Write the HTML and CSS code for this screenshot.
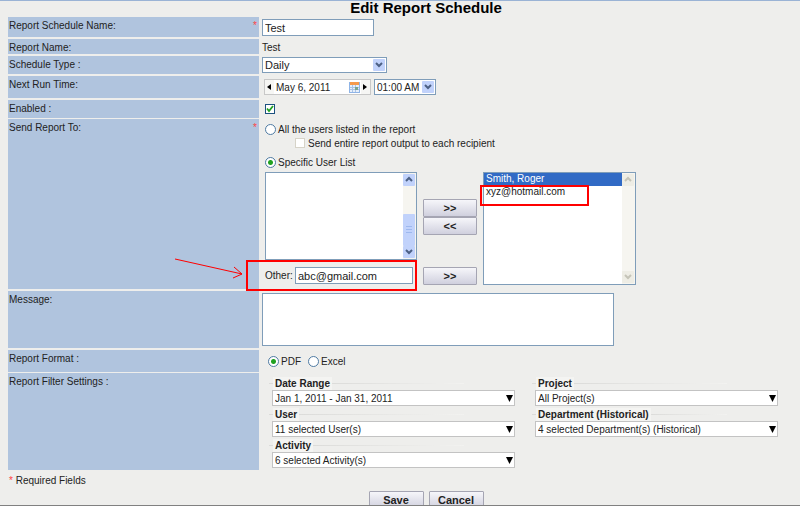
FILE: index.html
```html
<!DOCTYPE html>
<html lang="en">
<head>
    <meta charset="UTF-8">
    <meta name="viewport" content="width=device-width, initial-scale=1.0">
    <title>Edit Report Schedule</title>
    <link rel="stylesheet" href="styles.css">
</head>
<body>
<form class="page">
    <h1>Edit Report Schedule</h1>

    <div class="row row-name">
        <label class="name" for="schedName">Report Schedule Name: <b class="req">*</b></label>
        <div class="field"><input class="text sched" id="schedName" type="text" value="Test"></div>
    </div>
    <div class="row row-report">
        <span class="name">Report Name:</span>
        <div class="field">Test</div>
    </div>
    <div class="row row-type">
        <label class="name" for="schedType">Schedule Type :</label>
        <div class="field">
            <div class="drop drop-type">
                <select id="schedType"><option>Daily</option></select>
                <svg class="xp-arrow" viewBox="0 0 12 12"><rect width="12" height="12" rx="1"/><path d="M3 4l3 3 3-3"/></svg>
            </div>
        </div>
    </div>
    <div class="row row-run">
        <label class="name" for="runDate">Next Run Time:</label>
        <div class="field run">
            <div class="date">
                <button type="button" aria-label="Previous day"><svg viewBox="0 0 4 6"><path d="M4 0v6L0 3z"/></svg></button>
                <input id="runDate" type="text" value="May 6, 2011">
                <svg class="cal" viewBox="0 0 11 11">
                    <rect x="0" y="0" width="11" height="11" fill="#8fb4e6"/>
                    <rect x="1" y="0" width="9" height="3" fill="#f59a4c"/>
                    <rect x="1" y="3" width="9" height="7" fill="#e6effa"/>
                    <path d="M1 5.5h9M1 7.5h9M3.5 3v7M6.5 3v7" stroke="#a9c3e6" fill="none"/>
                    <rect x="6" y="5" width="3" height="3" fill="#7aa58f"/>
                </svg>
                <button type="button" aria-label="Next day"><svg viewBox="0 0 4 6"><path d="M0 0v6l4-3z"/></svg></button>
            </div>
            <div class="drop drop-time">
                <select aria-label="Run time"><option>01:00 AM</option></select>
                <svg class="xp-arrow" viewBox="0 0 12 12"><rect width="12" height="12" rx="1"/><path d="M3 4l3 3 3-3"/></svg>
            </div>
        </div>
    </div>
    <div class="row row-enabled">
        <label class="name" for="enabled">Enabled :</label>
        <div class="field"><input class="check" id="enabled" type="checkbox" checked></div>
    </div>

    <div class="row row-send">
        <span class="name">Send Report To: <b class="req">*</b></span>
        <div class="field">
            <label class="opt"><input type="radio" name="to"> All the users listed in the report</label>
            <label class="opt sub"><input class="check" type="checkbox" disabled> Send entire report output to each recipient</label>
            <label class="opt specific"><input type="radio" name="to" checked> Specific User List</label>
            <div class="users">
                <div class="source">
                    <div class="list">
                        <select multiple aria-label="Available users"></select>
                        <div class="bar">
                            <svg viewBox="0 0 12 12"><rect width="12" height="12" rx="1"/><path d="M3 7l3-3 3 3"/></svg>
                            <i class="thumb"></i>
                            <svg viewBox="0 0 12 12"><rect width="12" height="12" rx="1"/><path d="M3 4l3 3 3-3"/></svg>
                        </div>
                    </div>
                    <div class="other">
                        <label for="other">Other:</label>
                        <input class="text" id="other" type="text" value="abc@gmail.com">
                        <svg class="pointer" viewBox="0 0 72 24"><path d="M1 3l67 15M60 11l8 7-9 4"/></svg>
                    </div>
                </div>
                <div class="moves">
                    <button type="button" class="btn">&gt;&gt;</button>
                    <button type="button" class="btn">&lt;&lt;</button>
                    <button type="button" class="btn last">&gt;&gt;</button>
                </div>
                <div class="list target">
                    <select multiple aria-label="Selected users">
                        <option class="on">Smith, Roger</option>
                        <option>xyz@hotmail.com</option>
                    </select>
                    <div class="bar off">
                        <svg viewBox="0 0 12 12"><rect width="12" height="12" rx="1"/><path d="M3 7l3-3 3 3"/></svg>
                        <svg viewBox="0 0 12 12"><rect width="12" height="12" rx="1"/><path d="M3 4l3 3 3-3"/></svg>
                    </div>
                </div>
            </div>
        </div>
    </div>

    <div class="row row-message">
        <label class="name" for="message">Message:</label>
        <div class="field"><textarea class="text" id="message"></textarea></div>
    </div>
    <div class="row row-format">
        <span class="name">Report Format :</span>
        <div class="field formats">
            <label class="opt"><input type="radio" name="format" checked> PDF</label>
            <label class="opt"><input type="radio" name="format"> Excel</label>
        </div>
    </div>
    <div class="row row-filter">
        <span class="name">Report Filter Settings :</span>
        <div class="field filters">
            <div class="filter">
                <label for="range"><span>Date Range</span></label>
                <div class="drop"><select id="range"><option>Jan 1, 2011 - Jan 31, 2011</option></select><svg class="tri" viewBox="0 0 7 7"><path d="M0 0h7L3.5 7z"/></svg></div>
            </div>
            <div class="filter">
                <label for="project"><span>Project</span></label>
                <div class="drop"><select id="project"><option>All Project(s)</option></select><svg class="tri" viewBox="0 0 7 7"><path d="M0 0h7L3.5 7z"/></svg></div>
            </div>
            <div class="filter">
                <label for="user"><span>User</span></label>
                <div class="drop"><select id="user"><option>11 selected User(s)</option></select><svg class="tri" viewBox="0 0 7 7"><path d="M0 0h7L3.5 7z"/></svg></div>
            </div>
            <div class="filter">
                <label for="dept"><span>Department (Historical)</span></label>
                <div class="drop"><select id="dept"><option>4 selected Department(s) (Historical)</option></select><svg class="tri" viewBox="0 0 7 7"><path d="M0 0h7L3.5 7z"/></svg></div>
            </div>
            <div class="filter">
                <label for="activity"><span>Activity</span></label>
                <div class="drop"><select id="activity"><option>6 selected Activity(s)</option></select><svg class="tri" viewBox="0 0 7 7"><path d="M0 0h7L3.5 7z"/></svg></div>
            </div>
        </div>
    </div>

    <p class="note"><b class="req">*</b> Required Fields</p>
    <div class="actions">
        <button type="submit" class="btn">Save</button>
        <button type="button" class="btn">Cancel</button>
    </div>
</form>
</body>
</html>
```
FILE: styles.css
```css
*, *::before, *::after {
    box-sizing: border-box;
}
html {
    height: 100%;
    overflow: hidden;
}
body {
    margin: 0;
    min-height: 100%;
    background: #eeeeec;
    border-top: 1px solid #9ab3d5;
    color: #222;
    font: 10px/13px "Liberation Sans", Arial, sans-serif;
}
/* bottom edge of the window */
body::after {
    content: "";
    position: fixed;
    left: 0;
    right: 0;
    bottom: 0;
    height: 1px;
    background: #808080;
}
input, select, textarea, button {
    margin: 0;
    padding: 0;
    border: 0;
    color: inherit;
    font: inherit;
    border-radius: 0;
    outline: 0;
}
svg {
    display: block;
}
.page {
    padding: 0 8px;
}
h1 {
    margin: 0;
    padding: 0 0 2px 52px;
    color: #000;
    font-size: 15px;
    line-height: 14px;
    text-align: center;
}

/* rows */
.row {
    display: grid;
    grid-template-columns: 251px 1fr;
    gap: 3px;
    margin-bottom: 2px;
}
.name {
    display: flex;
    justify-content: space-between;
    padding: 2px 1px 0;
    background: #b0c4de;
}
.req {
    color: #f44;
    font-weight: normal;
}
.name .req {
    padding-right: 1px;
}
.row-name { min-height: 20px; }
.row-report { min-height: 15px; }
.row-report .field { padding-top: 2px; }
.row-type { min-height: 18px; }
.row-run { min-height: 22px; }
.row-enabled { min-height: 18px; margin-bottom: 1px; }
.row-send { min-height: 170px; }
.row-message { min-height: 57px; }
.row-format { min-height: 22px; margin-bottom: 1px; }
.row-filter { min-height: 97px; }

.text {
    display: block;
    border: 1px solid #7f9db9;
    background: #fff;
    padding: 0 2px;
    font-size: 11px;
}
.sched {
    width: 112px;
    height: 17px;
    margin-top: 2px;
}

/* drop-downs */
.drop {
    position: relative;
}
.drop select {
    display: block;
    width: 100%;
    height: 16px;
    padding: 0 2px;
    border: 1px solid #7f9db9;
    background: #fff;
    appearance: none;
}
.xp-arrow {
    position: absolute;
    top: 2px;
    right: 2px;
    width: 12px;
    height: 12px;
}
.xp-arrow rect, .bar rect {
    fill: #c1d2fb;
}
.xp-arrow path, .bar path {
    fill: none;
    stroke: #4d6185;
    stroke-width: 2;
}
.drop-type {
    width: 125px;
    margin-top: 1px;
}
.drop-type select {
    font-size: 11px;
}
.drop-time {
    width: 62px;
}
.run {
    display: flex;
    align-items: flex-start;
    gap: 3px;
    padding: 3px 0 0 2px;
}
.date {
    display: flex;
    align-items: center;
    width: 107px;
    height: 16px;
    border: 1px solid #c8c8c8;
    background: #fff;
}
.date input {
    flex: 1;
    min-width: 0;
    padding-left: 2px;
    background: none;
}
.date button {
    width: 9px;
    height: 14px;
    padding-left: 2px;
    background: #f6f6f4;
}
.date button svg {
    width: 4px;
    height: 6px;
}
.cal {
    width: 11px;
    height: 11px;
    margin-right: 1px;
}

/* tick boxes and radios */
.check {
    display: block;
    flex: none;
    width: 10px;
    height: 10px;
    appearance: none;
    border: 1px solid #1c5180;
    background: #fff;
}
.check:checked {
    background: #fff url("data:image/svg+xml,%3Csvg xmlns='http://www.w3.org/2000/svg' viewBox='0 0 8 8'%3E%3Cpath d='M1 3.5l2 2.5 4-5' fill='none' stroke='%2321a121' stroke-width='1.8'/%3E%3C/svg%3E");
}
.check:disabled {
    border-color: #d6d3c8;
}
.row-enabled .check {
    margin: 4px 0 0 3px;
}
.opt {
    display: flex;
    align-items: center;
    gap: 2px;
    height: 14px;
}
.opt input[type="radio"] {
    width: 11px;
    height: 11px;
    appearance: none;
    border: 1px solid #4f7ba3;
    border-radius: 50%;
    background: #fff;
}
.opt input[type="radio"]:checked {
    background: radial-gradient(circle, #21a121 2px, #fff 3px);
}
.row-send .field {
    padding: 3px 0 0 3px;
}
.sub {
    padding-left: 30px;
    gap: 3px;
}
.specific {
    margin: 5px 0 3px;
}

/* user pickers */
.users {
    display: flex;
    gap: 6px;
}
.source {
    width: 152px;
}
.list {
    display: flex;
    height: 88px;
    border: 1px solid #7f9db9;
    background: #fff;
}
.list select {
    flex: 1;
    min-width: 0;
    overflow: hidden;
    background: #fff;
}
.list option {
    min-height: 13px;
    padding: 0 2px;
    line-height: 13px;
}
.list .on {
    background: #316ac5;
    color: #fff;
}
.bar {
    display: flex;
    flex-direction: column;
    justify-content: space-between;
    width: 13px;
    padding: 1px 0;
    background: #f6f5f0;
}
.bar svg {
    width: 12px;
    height: 12px;
}
.thumb {
    width: 12px;
    height: 32px;
    margin-top: auto;
    border-radius: 1px;
    background: linear-gradient(#9db8ee, #9db8ee) center 12px / 6px 1px no-repeat,
        linear-gradient(#9db8ee, #9db8ee) center 15px / 6px 1px no-repeat,
        linear-gradient(#9db8ee, #9db8ee) center 18px / 6px 1px no-repeat, #c1d2fb;
}
.off rect {
    fill: #eeede5;
}
.off path {
    stroke: #c5c4b8;
}
.target {
    position: relative;
    width: 153px;
    height: 113px;
}
/* highlight frame over the second name */
.target::after {
    content: "";
    position: absolute;
    top: 12px;
    left: -4px;
    width: 109px;
    height: 21px;
    border: 2px solid #f00;
}
.other {
    position: relative;
    display: flex;
    align-items: center;
    justify-content: space-between;
    padding: 7px 4px 0 0;
}
.other .text {
    width: 118px;
    height: 17px;
}
/* highlight frame and arrow round the address */
.other::after {
    content: "";
    position: absolute;
    top: 0;
    left: -19px;
    right: 0;
    height: 31px;
    border: 2px solid #f00;
}
.pointer {
    position: absolute;
    top: -4px;
    left: -91px;
    width: 72px;
    height: 24px;
    fill: none;
    stroke: #f00;
    stroke-width: 1;
}
.btn {
    display: block;
    width: 55px;
    height: 18px;
    border: 1px solid #a5a5b3;
    border-radius: 1px;
    background: linear-gradient(#f6f6fa, #d0d0de);
    color: #222;
    font-size: 11px;
    font-weight: bold;
}
.moves {
    display: flex;
    flex-direction: column;
    width: 54px;
    padding-top: 27px;
}
.moves .btn {
    width: 100%;
}
.moves .last {
    margin: auto 0 0;
}

#message {
    width: 352px;
    height: 53px;
    margin-top: 2px;
    resize: none;
}
.formats {
    display: flex;
    align-items: flex-start;
    gap: 7px;
    padding: 4px 0 0 6px;
}

/* filters */
.filters {
    display: grid;
    grid-template-columns: 243px 243px;
    grid-auto-rows: 31px;
    column-gap: 20px;
    padding: 4px 0 0 10px;
}
.filter label {
    display: flex;
    align-items: center;
    height: 13px;
    font-weight: bold;
}
.filter label span {
    padding: 0 2px;
    background: #f4f4f2;
}
.filter label::before {
    content: "";
    width: 4px;
    height: 1px;
    margin-left: -3px;
    background: #dcdcda;
}
.filter label::after {
    content: "";
    flex: 1;
    height: 1px;
    margin-right: 51px;
    background: linear-gradient(90deg, #dcdcda, #f2f2f0);
}
.filter .drop select {
    border-color: #c3c3c3;
}
.tri {
    position: absolute;
    top: 5px;
    right: 2px;
    width: 7px;
    height: 7px;
}

.note {
    margin: 0;
    padding: 2px 1px 0;
}
.actions {
    display: flex;
    justify-content: center;
    gap: 5px;
    padding: 4px 0 0 52px;
}
```
